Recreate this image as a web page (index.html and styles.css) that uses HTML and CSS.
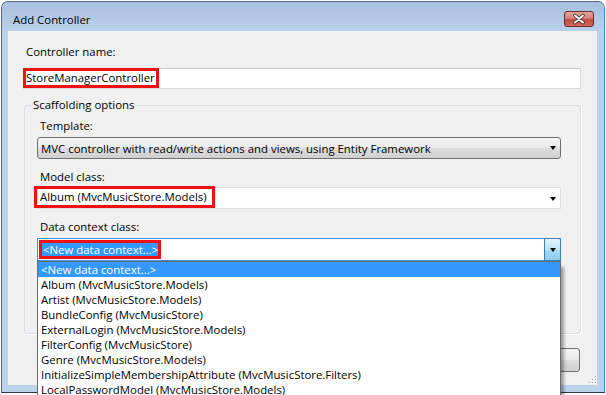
FILE: index.html
```html
<!DOCTYPE html>
<html lang="en">
<head>
  <meta charset="UTF-8">
  <title>Add Controller</title>
  <link rel="stylesheet" href="styles.css">
</head>
<body>
  <div class="window">
    <div class="titlebar">
      <span class="title">Add Controller</span>
      <button class="close" title="Close">
        <svg width="28" height="14" viewBox="0 0 28 14">
          <path d="M10 3.5 L18 10.5 M18 3.5 L10 10.5" stroke="#3b2a2a" stroke-width="3.6" stroke-linecap="round"/>
          <path d="M10 3.5 L18 10.5 M18 3.5 L10 10.5" stroke="#fff" stroke-width="2" stroke-linecap="round"/>
        </svg>
      </button>
    </div>
    <div class="frame">
      <div class="client">
        <label class="label top-label">Controller name:</label>
        <div class="textbox"><span class="mark">StoreManagerController</span></div>

        <fieldset class="group">
          <legend>Scaffolding options</legend>
          <div class="group-body">
            <label class="label first">Template:</label>
            <div class="select">
              <span>MVC controller with read/write actions and views, using Entity Framework</span>
              <span class="arrow"></span>
            </div>

            <label class="label">Model class:</label>
            <div class="combo">
              <span class="mark">Album (MvcMusicStore.Models)</span>
              <span class="arrow"></span>
            </div>

            <label class="label">Data context class:</label>
            <div class="combo focused">
              <span class="mark selected">&lt;New data context...&gt;</span>
              <span class="drop-btn"><span class="arrow"></span></span>
              <ul class="list">
                <li class="active">&lt;New data context...&gt;</li>
                <li>Album (MvcMusicStore.Models)</li>
                <li>Artist (MvcMusicStore.Models)</li>
                <li>BundleConfig (MvcMusicStore)</li>
                <li>ExternalLogin (MvcMusicStore.Models)</li>
                <li>FilterConfig (MvcMusicStore)</li>
                <li>Genre (MvcMusicStore.Models)</li>
                <li>InitializeSimpleMembershipAttribute (MvcMusicStore.Filters)</li>
                <li>LocalPasswordModel (MvcMusicStore.Models)</li>
              </ul>
            </div>
          </div>
        </fieldset>

        <div class="buttons">
          <button class="btn">Add</button>
          <button class="btn">Cancel</button>
        </div>

        <div class="grip">
          <svg width="10" height="8" viewBox="0 0 10 8">
            <g fill="#fff">
              <rect x="9" y="1" width="1" height="1"/>
              <rect x="6" y="4" width="1" height="1"/><rect x="9" y="4" width="1" height="1"/>
              <rect x="3" y="7" width="1" height="1"/><rect x="6" y="7" width="1" height="1"/><rect x="9" y="7" width="1" height="1"/>
            </g>
            <g fill="#a0a0a0">
              <rect x="8" y="0" width="1" height="1"/>
              <rect x="5" y="3" width="1" height="1"/><rect x="8" y="3" width="1" height="1"/>
              <rect x="2" y="6" width="1" height="1"/><rect x="5" y="6" width="1" height="1"/><rect x="8" y="6" width="1" height="1"/>
            </g>
          </svg>
        </div>
      </div>
    </div>
  </div>
</body>
</html>
```

FILE: styles.css
```css
html, body {
  margin: 0;
}
body {
  width: 606px;
  height: 395px;
  overflow: hidden;
  background: #fff;
  font-family: "Open Sans", "Noto Sans", sans-serif;
  font-size: 11.4px;
  color: #000;
}
.window {
  margin: 1px 0 0 1px;
  width: 602px;
  border: 1px solid #56657a;
  border-right-color: #3592c8;
  border-bottom-color: #2e3440;
  border-radius: 7px 7px 0 0;
  background: #bcd2eb;
}
.titlebar {
  display: flex;
  justify-content: space-between;
  align-items: flex-start;
  height: 29px;
  padding-left: 11px;
  border-radius: 6px 6px 0 0;
  background: linear-gradient(#a7c0de, #bad0ea);
  box-sizing: border-box;
}
.title {
  margin-top: 10px;
  line-height: 16px;
}
.close {
  margin: 9px 10px 0 0;
  width: 30px;
  height: 16px;
  padding: 0;
  border: 1px solid #6b2b27;
  border-radius: 3px;
  background: linear-gradient(#e3a69d 0%, #d88278 45%, #c24a3d 55%, #cf6a58 100%);
  box-sizing: border-box;
  display: flex;
  align-items: center;
  justify-content: center;
}
.close svg {
  display: block;
}
.frame {
  padding: 0 7px 7px 6px;
}
.client {
  display: flex;
  flex-direction: column;
  height: 354px;
  padding: 13px 16px 0 15px;
  background: #f0f0f0;
  box-sizing: border-box;
}
.label {
  display: block;
  margin-top: 10px;
  padding-left: 3px;
  line-height: 16px;
}
.label.top-label {
  margin-top: 0;
}
.label.first {
  margin-top: 5px;
}
.textbox {
  display: flex;
  align-items: flex-start;
  margin-top: 8px;
  height: 21px;
  border: 1px solid #d5d8de;
  border-top-color: #c3c6cc;
  background: #fff;
  box-sizing: border-box;
}
.mark {
  border: 3px solid #ee1111;
  white-space: nowrap;
}
.textbox .mark {
  margin: -1px 0 0 -1px;
  height: 20px;
  line-height: 14px;
  padding-right: 1px;
  box-sizing: border-box;
}
.group {
  margin: 8px 0 0 1px;
  padding: 0;
  min-width: 0;
  border: 1px solid #d5dfe5;
  border-radius: 3px;
  box-shadow: 1px 1px 0 #fff;
}
.group legend {
  margin-left: 6px;
  padding: 0 2px;
  line-height: 16px;
}
.group-body {
  padding: 0 19px 72px 12px;
}
.select, .combo {
  display: flex;
  align-items: center;
  position: relative;
  margin-top: 3px;
  height: 22px;
  box-sizing: border-box;
  white-space: nowrap;
}
.select {
  padding-left: 3px;
  border: 1px solid #707070;
  border-radius: 3px;
  background: linear-gradient(#f3f3f3 0%, #ebebeb 48%, #dddddd 52%, #cfcfcf 100%);
}
.arrow {
  margin-left: auto;
  margin-right: 4px;
  width: 0;
  height: 0;
  border-left: 3.5px solid transparent;
  border-right: 3.5px solid transparent;
  border-top: 4px solid #000;
}
.combo {
  margin-top: 2px;
  align-items: flex-start;
  border: 1px solid #dadde3;
  background: #fff;
}
.combo .arrow {
  margin-top: 9px;
}
.combo .mark {
  margin: -2px 0 0 -4px;
  height: 22px;
  line-height: 16px;
  padding: 0 5px 0 3px;
  box-sizing: border-box;
}
.combo.focused {
  margin-top: 3px;
  height: 23px;
  border-color: #3d8ee0;
}
.combo .mark.selected {
  margin: 1px 0 0 1px;
  height: 19px;
  line-height: 13px;
  padding: 0 0 0 1px;
  background: #3399ff;
  color: #fff;
}
.drop-btn {
  display: flex;
  align-items: center;
  margin: -1px -1px -1px auto;
  width: 17px;
  height: 23px;
  border: 1px solid #3c7fb1;
  border-radius: 0 2px 2px 0;
  background: linear-gradient(#e6f4fc 0%, #bde4f8 50%, #a7d9f5 52%, #8ec9ee 100%);
  box-sizing: border-box;
}
.drop-btn .arrow {
  margin: 0 auto;
}
.list {
  position: absolute;
  top: calc(100% + 1px);
  left: -1px;
  width: 524px;
  height: 134px;
  margin: 0;
  padding: 0;
  list-style: none;
  overflow: hidden;
  background: #fff;
  border: 1px solid #6c6c6c;
  border-bottom: 0;
  box-sizing: border-box;
  box-shadow: 4px 5px 3px -1px rgba(0, 0, 0, 0.35);
}
.list li {
  height: 15px;
  line-height: 15px;
  padding-left: 3px;
}
.list li.active {
  background: #3399ff;
  color: #fff;
}
.buttons {
  display: flex;
  justify-content: flex-end;
  gap: 6px;
  margin: 14px 1px 0 0;
}
.btn {
  width: 75px;
  height: 24px;
  font: inherit;
  border: 1px solid #707070;
  border-radius: 3px;
  background: linear-gradient(#f3f3f3 0%, #ebebeb 48%, #dddddd 52%, #cfcfcf 100%);
}
.grip {
  margin: auto -16px 1px 0;
  align-self: flex-end;
  height: 8px;
}
.grip svg {
  display: block;
}
```
